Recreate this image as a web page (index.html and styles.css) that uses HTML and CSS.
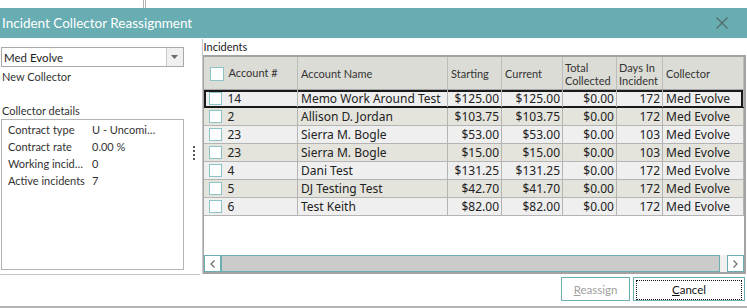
FILE: index.html
```html
<!DOCTYPE html>
<html lang="en">
<head>
<meta charset="UTF-8">
<title>Incident Collector Reassignment</title>
<link rel="stylesheet" href="styles.css">
</head>
<body>
<div class="backdrop"><span class="edge"></span></div>
<div class="titlebar">
    <span class="title">Incident Collector Reassignment</span>
    <svg class="close" width="12" height="12" viewBox="0 0 12 12"><path d="M0.5 0.5 L11.5 11.5 M11.5 0.5 L0.5 11.5" stroke="#55686a" stroke-width="1.2" fill="none"/></svg>
</div>
<div class="main">
    <div class="left">
        <div class="combo">
            <span class="combo-text">Med Evolve</span>
            <span class="combo-btn"><svg width="7" height="4" viewBox="0 0 7 4"><path d="M0 0 H7 L3.5 4 Z" fill="#6a6a6a"/></svg></span>
        </div>
        <div class="caption">New Collector</div>
        <div class="caption details-title">Collector details</div>
        <div class="details">
            <div class="drow"><span class="dlabel">Contract type</span><span>U - Uncomi…</span></div>
            <div class="drow"><span class="dlabel">Contract rate</span><span>0.00 %</span></div>
            <div class="drow"><span class="dlabel">Working incid…</span><span>0</span></div>
            <div class="drow"><span class="dlabel">Active incidents</span><span>7</span></div>
        </div>
    </div>
    <div class="splitter">
        <div class="dots"><i></i><i></i><i></i><i></i></div>
    </div>
    <div class="right">
        <div class="group-label">Incidents</div>
        <div class="grid">
            <table>
                <colgroup>
                    <col style="width:94px"><col style="width:150px"><col style="width:54px"><col style="width:61px"><col style="width:54px"><col style="width:46px"><col style="width:81px">
                </colgroup>
                <thead>
                    <tr>
                        <th><span class="chk"></span>Account #</th>
                        <th>Account Name</th>
                        <th>Starting</th>
                        <th>Current</th>
                        <th class="two">Total<br>Collected</th>
                        <th class="two">Days In<br>Incident</th>
                        <th>Collector</th>
                    </tr>
                </thead>
                <tbody>
                    <tr class="odd selected"><td><span class="chk"></span>14</td><td>Memo Work Around Test</td><td class="num">$125.00</td><td class="num">$125.00</td><td class="num">$0.00</td><td class="num">172</td><td>Med Evolve</td></tr>
                    <tr class="even"><td><span class="chk"></span>2</td><td>Allison D. Jordan</td><td class="num">$103.75</td><td class="num">$103.75</td><td class="num">$0.00</td><td class="num">172</td><td>Med Evolve</td></tr>
                    <tr class="odd"><td><span class="chk"></span>23</td><td>Sierra M. Bogle</td><td class="num">$53.00</td><td class="num">$53.00</td><td class="num">$0.00</td><td class="num">103</td><td>Med Evolve</td></tr>
                    <tr class="even"><td><span class="chk"></span>23</td><td>Sierra M. Bogle</td><td class="num">$15.00</td><td class="num">$15.00</td><td class="num">$0.00</td><td class="num">103</td><td>Med Evolve</td></tr>
                    <tr class="odd"><td><span class="chk"></span>4</td><td>Dani Test</td><td class="num">$131.25</td><td class="num">$131.25</td><td class="num">$0.00</td><td class="num">172</td><td>Med Evolve</td></tr>
                    <tr class="even"><td><span class="chk"></span>5</td><td>DJ Testing Test</td><td class="num">$42.70</td><td class="num">$41.70</td><td class="num">$0.00</td><td class="num">172</td><td>Med Evolve</td></tr>
                    <tr class="odd"><td><span class="chk"></span>6</td><td>Test Keith</td><td class="num">$82.00</td><td class="num">$82.00</td><td class="num">$0.00</td><td class="num">172</td><td>Med Evolve</td></tr>
                </tbody>
            </table>
            <div class="grid-space"></div>
            <div class="hscroll">
                <span class="sbtn"><svg width="5" height="8" viewBox="0 0 5 8"><path d="M4.5 0.5 L1 4 L4.5 7.5" stroke="#707070" stroke-width="1.3" fill="none"/></svg></span>
                <span class="thumb"></span>
                <span class="track"></span>
                <span class="sbtn"><svg width="5" height="8" viewBox="0 0 5 8"><path d="M0.5 0.5 L4 4 L0.5 7.5" stroke="#707070" stroke-width="1.3" fill="none"/></svg></span>
            </div>
        </div>
    </div>
</div>
<div class="footer">
    <div class="footer-left"></div>
    <div class="buttons">
        <button class="btn disabled"><u>R</u>eassign</button>
        <button class="btn focused"><span class="focus"><u>C</u>ancel</span></button>
    </div>
</div>
</body>
</html>
```

FILE: styles.css
```css
body {
    margin: 0;
    width: 747px;
    height: 308px;
    overflow: hidden;
    font-family: Lato, "Noto Sans", sans-serif;
    font-size: 11px;
    color: #1e1e1e;
    background-color: #fff;
}

.backdrop {
    height: 8px;
    display: flex;
    padding-left: 143px;
}

.edge {
    width: 1px;
    border-left: 1px solid #b0b0b0;
    border-right: 1px solid #b0b0b0;
}

.titlebar {
    height: 30px;
    background-color: #67adb2;
    display: flex;
    align-items: center;
    justify-content: space-between;
    padding: 0 19px 0 2px;
}

.title {
    color: #fff;
    font-size: 13.5px;
}

.main {
    display: flex;
    height: 236px;
}

.left {
    width: 183px;
    padding: 9px 0 0 1px;
}

.combo {
    height: 18px;
    border: 1px solid #a9a9a9;
    display: flex;
    align-items: center;
}

.combo-text {
    flex: 1;
    padding-left: 2px;
    font-size: 11.5px;
}

.combo-btn {
    width: 16px;
    height: 18px;
    border-left: 1px solid #c8c8c8;
    background-color: #f0f0f0;
    display: flex;
    align-items: center;
    justify-content: center;
}

.caption {
    height: 17px;
    line-height: 17px;
    margin-top: 1px;
    padding-left: 1px;
    color: #333;
}

.details-title {
    margin-top: 17px;
}

.details {
    height: 148px;
    border: 1px solid #b4b4b4;
    padding: 1px 0 0 6px;
}

.drow {
    display: flex;
    height: 17px;
    line-height: 17px;
    color: #333;
    white-space: nowrap;
}

.dlabel {
    width: 84px;
}

.splitter {
    width: 18px;
    display: flex;
    align-items: center;
    justify-content: center;
}

.dots {
    display: flex;
    flex-direction: column;
    gap: 2px;
    margin-top: -6px;
    margin-left: 3px;
}

.dots i {
    display: block;
    width: 2px;
    height: 2px;
    background-color: #5a5a5a;
}

.right {
    flex: 1;
    display: flex;
    flex-direction: column;
    border-left: 1px solid #c8c8c8;
    margin-top: 1px;
}

.group-label {
    height: 16px;
    line-height: 15px;
    padding-left: 1px;
    color: #222;
}

.grid {
    flex: 1;
    display: flex;
    flex-direction: column;
    border: 2px solid #a3a3a3;
    border-left-width: 1px;
    margin-right: 1px;
}

table {
    border-collapse: collapse;
    table-layout: fixed;
    width: 540px;
}

th {
    height: 31px;
    padding: 0 0 0 3px;
    background-color: #dcdcd6;
    border-right: 1px solid #bcbcbc;
    border-bottom: 1px solid #a8a8a8;
    font-weight: normal;
    text-align: left;
    line-height: 13px;
    color: #333;
    white-space: nowrap;
}

th.two {
    padding-left: 2px;
    padding-top: 1px;
}

th:first-child {
    padding-left: 6px;
}

th:first-child .chk {
    width: 12px;
    height: 12px;
    margin: 0 5px 0 0;
    vertical-align: -4px;
}

td {
    height: 17px;
    padding: 0 3px;
    border-right: 1px solid #b4b4b4;
    border-bottom: 1px solid #b4b4b4;
    font-family: "Noto Sans", sans-serif;
    font-size: 12px;
    line-height: 17px;
    white-space: nowrap;
    overflow: hidden;
    color: #222;
}

td:first-child {
    padding-left: 5px;
}

td.num {
    text-align: right;
    padding-right: 2px;
}

tr.odd td {
    background-color: #efefef;
}

tr.even td {
    background-color: #e4e4dc;
}

tr.selected td {
    border-bottom-color: #1a1a1a;
    box-shadow: inset 0 2px 0 #1a1a1a, inset 0 -1px 0 #1a1a1a;
}

tr.selected td:first-child {
    box-shadow: inset 2px 0 0 #1a1a1a, inset 0 2px 0 #1a1a1a, inset 0 -1px 0 #1a1a1a;
}

tr.selected td:last-child {
    box-shadow: inset -2px 0 0 #1a1a1a, inset 0 2px 0 #1a1a1a, inset 0 -1px 0 #1a1a1a;
}

.chk {
    display: inline-block;
    width: 11px;
    height: 11px;
    border: 1px solid #8cc3c6;
    background-color: #fff;
    margin-right: 6px;
    vertical-align: -2px;
}

.grid-space {
    flex: 1;
    background-color: #fff;
}

.hscroll {
    height: 17px;
    display: flex;
    background-color: #f0f0f0;
}

.sbtn {
    width: 15px;
    height: 15px;
    border: 1px solid #6aaeb2;
    background-color: #fff;
    display: flex;
    align-items: center;
    justify-content: center;
}

.thumb {
    width: 497px;
    height: 15px;
    background-color: #cbcbcb;
    border: 1px solid #6aaeb2;
}

.track {
    flex: 1;
}

.footer {
    height: 32px;
    display: flex;
    border-bottom: 2px solid #b4b4b4;
}

.footer-left {
    width: 200px;
    border-top: 1px solid #c4c4c4;
}

.buttons {
    flex: 1;
    display: flex;
    justify-content: flex-end;
    gap: 3px;
    padding: 3px 2px 0 0;
}

.btn {
    height: 24px;
    font-family: inherit;
    font-size: 11.5px;
    background-color: #fff;
    border: 1px solid #6aaeb2;
    padding: 0;
}

.btn.disabled {
    width: 69px;
    color: #a0a0a0;
}

.btn.focused {
    width: 112px;
    padding: 2px;
    color: #111;
}

.focus {
    display: block;
    height: 18px;
    line-height: 18px;
    border: 1px dotted #111;
}
```
